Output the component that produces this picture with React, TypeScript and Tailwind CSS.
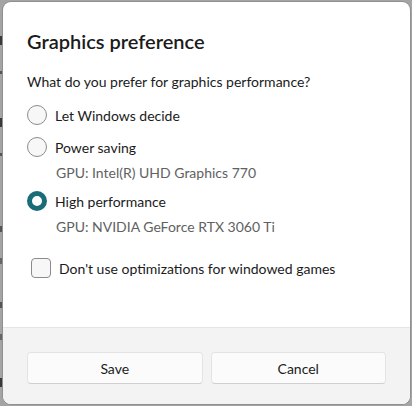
import { useState } from "react";

const font = { fontFamily: 'Lato, "Noto Sans", sans-serif' };

type Option = { id: string; label: string; gpu?: string };

const options: Option[] = [
  { id: "auto", label: "Let Windows decide" },
  { id: "saving", label: "Power saving", gpu: "GPU: Intel(R) UHD Graphics 770" },
  { id: "high", label: "High performance", gpu: "GPU: NVIDIA GeForce RTX 3060 Ti" },
];

function Radio({ checked }: { checked: boolean }) {
  if (checked) {
    return <span className="block w-5 h-5 rounded-full border-[5px] border-[#1b6c79] bg-white shrink-0" />;
  }
  return <span className="block w-5 h-5 rounded-full border border-[#8b8b8b] bg-[#f7f7f7] shrink-0" />;
}

export default function App() {
  const [choice, setChoice] = useState("high");
  const [noOpt, setNoOpt] = useState(false);

  return (
    <div className="relative w-[412px] h-[406px] bg-[#a4a4a4] overflow-hidden" style={font}>
      {/* bits of the window behind the dialog */}
      <div className="flex flex-col gap-[26px] pt-[36px]">
        <span className="block w-[2px] h-[9px] bg-[#3a3a3a]" />
        <span className="block w-[2px] h-[3px] bg-[#555]" />
        <span className="block w-[2px] h-[9px] bg-[#3a3a3a] mt-[18px]" />
        <span className="block w-[2px] h-[3px] bg-[#555]" />
        <span className="block w-[2px] h-[6px] bg-[#555] mt-[44px]" />
        <span className="block w-[2px] h-[6px] bg-[#666]" />
        <span className="block w-[2px] h-[6px] bg-[#555] mt-[12px]" />
        <span className="block w-[2px] h-[6px] bg-[#666]" />
        <span className="block w-[2px] h-[9px] bg-[#3a3a3a] mt-[12px]" />
        <span className="block w-[2px] h-[6px] bg-[#666]" />
      </div>

      {/* dialog */}
      <div className="absolute left-[3px] top-[2px] w-[407px] h-[402px] bg-white rounded-lg flex flex-col overflow-hidden shadow-[0_0_0_1px_rgba(0,0,0,0.12)]">
        <div className="flex-1 px-6 pt-[25px] text-[#1b1b1b]">
          <h1 className="text-[20px] leading-7 font-semibold">Graphics preference</h1>
          <p className="mt-[17px] text-[14px] leading-5">What do you prefer for graphics performance?</p>

          <div className="mt-[7px] flex flex-col">
            {options.map((o) => (
              <div key={o.id} className={o.id === "high" ? "mt-[2px]" : ""}>
                <button
                  type="button"
                  onClick={() => setChoice(o.id)}
                  className="h-8 flex items-center gap-2 text-[14px] text-[#1b1b1b]"
                >
                  <Radio checked={choice === o.id} />
                  <span>{o.label}</span>
                </button>
                {o.gpu && (
                  <p className="pl-[29px] text-[14px] leading-5 text-[#616161]">{o.gpu}</p>
                )}
              </div>
            ))}
          </div>

          <button
            type="button"
            onClick={() => setNoOpt(!noOpt)}
            className="mt-[15px] ml-1 h-8 flex items-center gap-2 text-[14px] text-[#1b1b1b]"
          >
            <span className="block w-5 h-5 rounded-[4px] border border-[#8b8b8b] bg-[#f7f7f7] shrink-0" />
            <span>Don't use optimizations for windowed games</span>
          </button>
        </div>

        <div className="h-[77px] bg-[#f3f3f3] border-t border-[#e5e5e5] px-6 pt-6 flex gap-2">
          <button
            type="button"
            className="flex-1 h-8 rounded-[4px] bg-[#fbfbfb] border border-[#e4e4e4] border-b-[#cfcfcf] text-[14px] text-[#1b1b1b]"
          >
            Save
          </button>
          <button
            type="button"
            className="flex-1 h-8 rounded-[4px] bg-[#fbfbfb] border border-[#e4e4e4] border-b-[#cfcfcf] text-[14px] text-[#1b1b1b]"
          >
            Cancel
          </button>
        </div>
      </div>
    </div>
  );
}
